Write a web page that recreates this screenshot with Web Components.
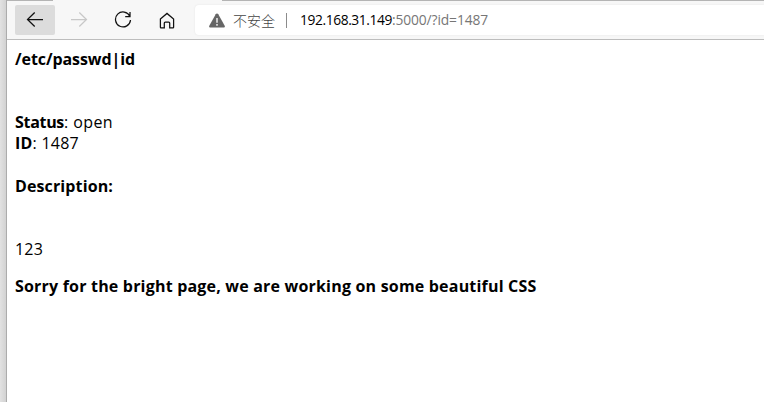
<!DOCTYPE html>
<html lang="zh-CN"><head><meta charset="utf-8"><title>192.168.31.149:5000/?id=1487</title>
<style>html,body{margin:0;height:100%;overflow:hidden;background:#fff}body{font-family:"Open Sans","Noto Sans","Noto Sans CJK SC",sans-serif;color:#000}</style></head>
<body>
<browser-window>
<browser-toolbar slot="toolbar"></browser-toolbar>
<ticket-page></ticket-page>
</browser-window>
<script>
// Text run whose tracking is adjusted to occupy a given width.
class FitText extends HTMLElement{
 constructor(){super();this.attachShadow({mode:'open'}).innerHTML='<style>:host{display:inline-block;white-space:pre}span{display:inline-block}</style><span><slot></slot></span>'}
 connectedCallback(){
  const s=this.shadowRoot.querySelector('span'),w=+this.getAttribute('w');
  this.style.width=w+'px';
  const n=this.textContent.length;
  s.style.letterSpacing=((w-s.getBoundingClientRect().width)/n)+'px';
 }
}
class NavButton extends HTMLElement{
 constructor(){super();this.attachShadow({mode:'open'}).innerHTML=`<style>:host{display:flex;align-items:center;justify-content:center;width:40px;height:30px;border-radius:2px;color:#111}:host([active]){background:#dcdcdc}:host([disabled]){color:#c8c8c8}</style><slot></slot>`}
}
class AddressBar extends HTMLElement{
 constructor(){super();this.attachShadow({mode:'open'}).innerHTML=`<style>
 :host{display:flex;align-items:center;height:30px;flex:1;background:#fff;border-radius:4px 0 0 4px;box-shadow:0 0 2px #e2e2e2;font-size:14px;line-height:20px;color:#767676}
 svg{margin-left:14px;flex:none}.warn{margin:-1px 0 0 8px;width:43px;font-family:"Noto Sans CJK SC",sans-serif;white-space:nowrap;font-weight:300;color:#444}i{width:1px;height:15px;background:#8b8b8b;margin:0 13px 0 10px}b{font-weight:400;color:#000}
 .url{display:flex;font-size:13.8px}</style>
 <svg width="16" height="15" viewBox="0 0 16 15"><path d="M8 .4c.6 0 1 .3 1.3.8l6.4 11.5c.5 1-.1 1.9-1.1 1.9H1.4c-1 0-1.6-.9-1.1-1.9L6.7 1.2C7 .7 7.4.4 8 .4Z" fill="#666"/><path d="M8 5v4.7M8 11v1.7" stroke="#eee" stroke-width="1.5"/></svg>
 <span class="warn">不安全</span><i></i><span class="url"><b><fit-text w="92">192.168.31.149</fit-text></b><fit-text w="96">:5000/?id=1487</fit-text></span>`}
}
class BrowserToolbar extends HTMLElement{
 constructor(){super();this.attachShadow({mode:'open'}).innerHTML=`<style>
 :host{display:grid;grid-template-rows:1px 38px 1px;background:#f7f7f7;height:40px}
 .top{display:flex;justify-content:space-between}.top i:first-child{width:46px;background:#b4b4b4}.top i:last-child{width:542px;background:#b4b4b4}
 .bar{display:flex;gap:4px;padding:4px 0 4px 8px}.line{background:#bdbdbd}address-bar{margin-left:4px}svg{fill:none;stroke:currentColor;stroke-width:1.25}</style>
 <div class="top"><i></i><i></i></div><div class="bar">
 <nav-button active><svg width="18" height="16"><path d="M17 7.5H1.5M8.7.5 1.5 7.5l7.2 7"/></svg></nav-button>
 <nav-button disabled><svg width="18" height="16"><path d="M1 7.5h15.5M9.3.5l7.2 7-7.2 7"/></svg></nav-button>
 <nav-button><svg width="18" height="18"><path d="M15.8 5.2A7.5 7.5 0 1 0 16.5 9M16 1v4.6h-4.8"/></svg></nav-button>
 <nav-button><svg width="16" height="17" viewBox="0 0 16 17"><path d="M1.4 7 8 1.4 14.6 7v8.2q0 .6-.6.6h-3.3V11q0-1-1-1H6.3q-1 0-1 1v4.8H2q-.6 0-.6-.6Z"/></svg></nav-button>
 <address-bar></address-bar></div><div class="line"></div>`}
}
class TicketPage extends HTMLElement{
 constructor(){super();this.attachShadow({mode:'open'}).innerHTML=`<style>
 :host{display:block;padding:9px 8px 0;font-size:16px;line-height:21px}p,h4{margin:0;height:21px;font-size:16px;white-space:nowrap;display:flex}
 b,h4{font-weight:700}.status{margin-top:42px}.desc{margin-top:22px}.body{margin-top:42px}.note{margin-top:16px}</style>
 <h4><fit-text w="120">/etc/passwd|id</fit-text></h4>
 <p class="status"><b><fit-text w="49">Status</fit-text></b><fit-text w="49">: open</fit-text></p>
 <p><b><fit-text w="17.5">ID</fit-text></b><fit-text w="46.5">: 1487</fit-text></p>
 <h4 class="desc"><fit-text w="98">Description:</fit-text></h4>
 <p class="body"><fit-text w="28">123</fit-text></p>
 <h4 class="note"><fit-text w="521.5">Sorry for the bright page, we are working on some beautiful CSS</fit-text></h4>`}
}
class BrowserWindow extends HTMLElement{
 constructor(){super();this.attachShadow({mode:'open'}).innerHTML=`<style>
 :host{display:grid;grid-template-columns:6px 1px 1fr;height:402px}.out{background:linear-gradient(90deg,#e2e2e2,#d2d2d2)}.edge{background:#acacac}main{min-width:0;background:#fff}</style>
 <div class="out"></div><div class="edge"></div><main><slot name="toolbar"></slot><slot></slot></main>`}
}
customElements.define('fit-text',FitText);
customElements.define('nav-button',NavButton);
customElements.define('address-bar',AddressBar);
customElements.define('browser-toolbar',BrowserToolbar);
customElements.define('ticket-page',TicketPage);
customElements.define('browser-window',BrowserWindow);
// Tracking is measured again once every element is in place.
document.querySelectorAll('ticket-page,browser-toolbar').forEach(function fit(e){
 if(e.localName==='fit-text'){e.shadowRoot.querySelector('span').style.letterSpacing='0';e.connectedCallback()}
 else if(e.shadowRoot)e.shadowRoot.querySelectorAll('fit-text,address-bar').forEach(fit);
});
</script></body></html>
